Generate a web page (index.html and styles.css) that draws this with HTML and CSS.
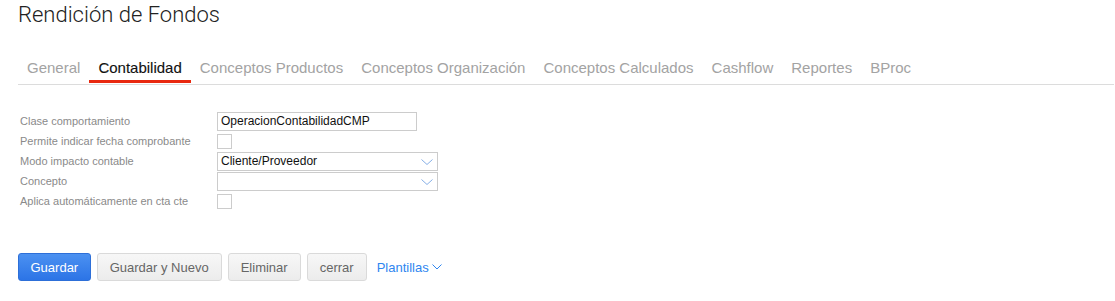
FILE: index.html
```html
<!DOCTYPE html>
<html lang="es">
<head>
    <meta charset="UTF-8">
    <meta name="viewport" content="width=device-width, initial-scale=1.0">
    <title>Rendición de Fondos</title>
    <link rel="stylesheet" href="styles.css">
</head>
<body>
    <div class="page">
        <h1 class="title">Rendición de Fondos</h1>

        <ul class="tabs">
            <li class="tab">General</li>
            <li class="tab active">Contabilidad</li>
            <li class="tab">Conceptos Productos</li>
            <li class="tab">Conceptos Organización</li>
            <li class="tab">Conceptos Calculados</li>
            <li class="tab">Cashflow</li>
            <li class="tab">Reportes</li>
            <li class="tab">BProc</li>
        </ul>

        <div class="form">
            <label class="lbl">Clase comportamiento</label>
            <div class="field"><input class="text" type="text" value="OperacionContabilidadCMP"></div>

            <label class="lbl">Permite indicar fecha comprobante</label>
            <div class="field"><span class="check"></span></div>

            <label class="lbl">Modo impacto contable</label>
            <div class="field">
                <div class="select">
                    <span class="value">Cliente/Proveedor</span>
                    <svg class="chev" width="12" height="6" viewBox="0 0 12 6"><path d="M0.5 0.5 L6 5.5 L11.5 0.5" fill="none" stroke="#86afe6" stroke-width="1"/></svg>
                </div>
            </div>

            <label class="lbl">Concepto</label>
            <div class="field">
                <div class="select">
                    <span class="value"></span>
                    <svg class="chev" width="12" height="6" viewBox="0 0 12 6"><path d="M0.5 0.5 L6 5.5 L11.5 0.5" fill="none" stroke="#86afe6" stroke-width="1"/></svg>
                </div>
            </div>

            <label class="lbl">Aplica automáticamente en cta cte</label>
            <div class="field"><span class="check"></span></div>
        </div>

        <div class="actions">
            <button class="btn primary">Guardar</button>
            <button class="btn">Guardar y Nuevo</button>
            <button class="btn">Eliminar</button>
            <button class="btn">cerrar</button>
            <a class="more">Plantillas
                <svg width="10" height="6" viewBox="0 0 10 6"><path d="M0.5 0.5 L5 5 L9.5 0.5" fill="none" stroke="#2f86f0" stroke-width="1"/></svg>
            </a>
        </div>
    </div>
</body>
</html>
```

FILE: styles.css
```css
body{
    margin: 0;
    background: #fff;
    font-family: "Liberation Sans", Arial, sans-serif;
    color: #222;
}
.page{
    padding: 0 1px 0 18px;
}
.title{
    margin: 2px 0 0 0;
    font-family: Roboto, "Liberation Sans", sans-serif;
    font-weight: 300;
    font-size: 22px;
    line-height: 26px;
    color: #222;
}

/* tabs */
.tabs{
    list-style: none;
    margin: 31px 0 0 0;
    padding: 0 0 1px 0;
    display: flex;
    border-bottom: 1px solid #dcdcdc;
}
.tab{
    padding: 0 9px 3px 9px;
    font-size: 15px;
    line-height: 18px;
    color: #a3a3a3;
    border-bottom: 3px solid transparent;
}
.tab.active{
    color: #111;
    -webkit-text-stroke: 0.12px #111;
    border-bottom-color: #e8280f;
}

/* form */
.form{
    margin-top: 26px;
    padding-left: 2px;
    display: grid;
    grid-template-columns: 197px 1fr;
    grid-auto-rows: 20px;
}
.lbl{
    font-size: 11px;
    color: #8a8a8a;
    display: flex;
    align-items: center;
}
.field{
    display: flex;
    align-items: center;
}
.text{
    box-sizing: border-box;
    width: 200px;
    height: 19px;
    margin: 0;
    padding: 0 3px;
    border: 1px solid #ccc;
    font-family: "Liberation Sans", Arial, sans-serif;
    font-size: 12px;
    color: #111;
    outline: none;
}
.check{
    box-sizing: border-box;
    width: 15px;
    height: 15px;
    border: 1px solid #ccc;
    background: #fff;
}
.select{
    position: relative;
    box-sizing: border-box;
    width: 221px;
    height: 19px;
    border: 1px solid #ccc;
    padding: 0 3px;
    font-size: 12px;
    line-height: 17px;
    color: #111;
}
.chev{
    position: absolute;
    right: 4px;
    top: 6px;
}

/* buttons */
.actions{
    margin-top: 42px;
    display: flex;
    align-items: center;
    gap: 6px;
}
.btn{
    box-sizing: border-box;
    height: 28px;
    padding: 0 12px;
    font-family: "Liberation Sans", Arial, sans-serif;
    font-size: 13px;
    color: #666;
    background: linear-gradient(#f7f7f7, #ececec);
    border: 1px solid #dadada;
    border-radius: 3px;
}
.primary{
    padding: 0 11.5px;
    color: #fff;
    background: linear-gradient(#4b91f1, #2c74e6);
    border-color: #2d6fd8;
}
.more{
    margin-left: 4px;
    font-size: 13px;
    color: #2f86f0;
    display: flex;
    align-items: center;
    gap: 3px;
}
```
